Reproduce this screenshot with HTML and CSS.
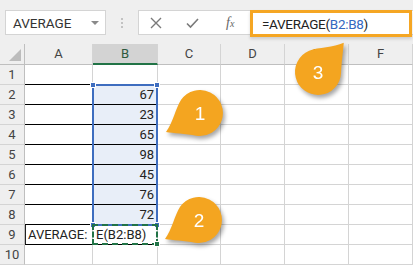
FILE: index.html
```html
<!DOCTYPE html>
<html lang="en">
<head>
  <meta charset="UTF-8">
  <title>AVERAGE</title>
  <link rel="stylesheet" href="styles.css">
</head>
<body>
  <div class="toolbar">
    <div class="namebox"><span>AVERAGE</span><span class="caret"></span></div>
    <div class="grip"></div>
    <div class="fbar">
      <div class="fbtns">
        <svg class="ico" width="12" height="12" viewBox="0 0 12 12"><path d="M1 1L11 11M11 1L1 11" stroke="#7a7a7a" stroke-width="1.4" fill="none"/></svg>
        <svg class="ico" width="13" height="12" viewBox="0 0 13 12"><path d="M1 6.5L4.5 10L12 2" stroke="#7a7a7a" stroke-width="1.6" fill="none"/></svg>
        <span class="fx">f<small>x</small></span>
      </div>
      <div class="finput">=AVERAGE(<span class="ref">B2:B8</span>)</div>
    </div>
  </div>

  <div class="stack">
    <div class="sheet">
      <div class="corner"></div>
      <div class="ch">A</div><div class="ch on">B</div><div class="ch">C</div><div class="ch">D</div><div class="ch">E</div><div class="ch">F</div>

      <div class="rh">1</div><div class="c k"></div><div class="c k"></div><div class="c"></div><div class="c"></div><div class="c"></div><div class="c"></div>
      <div class="rh">2</div><div class="c k"></div><div class="c k n hl">67</div><div class="c"></div><div class="c"></div><div class="c"></div><div class="c"></div>
      <div class="rh">3</div><div class="c k"></div><div class="c k n hl">23</div><div class="c"></div><div class="c"></div><div class="c"></div><div class="c"></div>
      <div class="rh">4</div><div class="c k"></div><div class="c k n hl">65</div><div class="c"></div><div class="c"></div><div class="c"></div><div class="c"></div>
      <div class="rh">5</div><div class="c k"></div><div class="c k n hl">98</div><div class="c"></div><div class="c"></div><div class="c"></div><div class="c"></div>
      <div class="rh">6</div><div class="c k"></div><div class="c k n hl">45</div><div class="c"></div><div class="c"></div><div class="c"></div><div class="c"></div>
      <div class="rh">7</div><div class="c k"></div><div class="c k n hl">76</div><div class="c"></div><div class="c"></div><div class="c"></div><div class="c"></div>
      <div class="rh">8</div><div class="c k"></div><div class="c k n hl">72</div><div class="c"></div><div class="c"></div><div class="c"></div><div class="c"></div>
      <div class="rh">9</div><div class="c k kl">AVERAGE:</div><div class="c k">E(B2:B8)</div><div class="c"></div><div class="c"></div><div class="c"></div><div class="c"></div>
      <div class="rh">10</div><div class="c"></div><div class="c"></div><div class="c"></div><div class="c"></div><div class="c"></div><div class="c"></div>
    </div>

    <div class="sheet marks">
      <div class="sel">
        <span class="h tl"></span><span class="h tr"></span><span class="h bl"></span><span class="h br"></span>
      </div>
      <div class="edit"><span class="h gr"></span></div>
    </div>
  </div>

  <svg class="balloon b1" width="80" height="70" viewBox="-40 -35 80 70">
    <path class="drop" d="M-34 19C-27 10 -24.5 -4.6 -18.9 -13.2A23 23 0 1 1 -4 22.7C-14 21 -27 20 -34 19Z"/>
    <text class="bn" x="0" y="6.5">1</text>
  </svg>
  <svg class="balloon b2" width="80" height="70" viewBox="-40 -35 80 70">
    <path class="drop" d="M-34 19C-27 10 -24.5 -4.6 -18.9 -13.2A23 23 0 1 1 -4 22.7C-14 21 -27 20 -34 19Z"/>
    <text class="bn" x="0" y="6.5">2</text>
  </svg>
  <svg class="balloon b3" width="80" height="70" viewBox="-40 -35 80 70">
    <path class="drop" transform="rotate(-77.8) scale(-1 1)" d="M-34 19C-27 10 -24.5 -4.6 -18.9 -13.2A23 23 0 1 1 -4 22.7C-14 21 -27 20 -34 19Z"/>
    <text class="bn" x="0" y="6.5">3</text>
  </svg>
</body>
</html>
```

FILE: styles.css
```css
body { margin: 0; width: 413px; height: 265px; overflow: hidden; position: relative; background: #fff; font-family: Roboto, "Liberation Sans", sans-serif; color: #222; }

/* formula bar */
.toolbar { height: 44px; box-sizing: border-box; padding-top: 10px; background: #efefef; display: flex; align-items: flex-start; }
.namebox { margin-left: 5px; width: 101px; height: 25px; box-sizing: border-box; background: #fff; border: 1px solid #d4d4d4; display: flex; align-items: center; justify-content: space-between; padding: 0 6px 0 7px; font-size: 13.5px; color: #333; }
.caret { border-left: 4px solid transparent; border-right: 4px solid transparent; border-top: 4px solid #8a8a8a; }
.grip { width: 0; height: 10px; margin: 8px 15px 0 15px; border-left: 2px dotted #c2c2c2; }
.fbar { flex: 1; height: 25px; box-sizing: border-box; display: flex; background: #fff; border: 1px solid #d4d4d4; border-right: none; }
.fbtns { width: 111px; display: flex; align-items: center; padding-left: 11px; box-sizing: border-box; }
.fbtns .ico { margin-right: 24px; }
.fbtns .ico + .ico { margin-right: 27px; }
.fx { font-family: "Liberation Serif", serif; font-style: italic; font-size: 14px; color: #666; }
.fx small { font-size: 10px; }
.finput { flex: 1; margin: -1px 1px -3px 0; border: 3px solid #f5a623; background: #fff; display: flex; align-items: center; padding-left: 9px; font-size: 13.5px; letter-spacing: -0.3px; color: #222; box-shadow: 0 2px 3px rgba(0,0,0,0.15); }
.ref { color: #3468c0; }

/* sheet: cells grid with a second grid of the same tracks stacked on top for the selection marks */
.stack { display: grid; }
.stack > .sheet { grid-area: 1 / 1; }
.sheet { display: grid; grid-template-columns: 25px 68px 65px 63px 64px 64px 64px; grid-template-rows: 21px repeat(10, 20px); }
.corner { background: #efefef; border-right: 1px solid #bfbfbf; border-bottom: 1px solid #bfbfbf; display: flex; justify-content: flex-end; align-items: flex-end; padding: 0 3px 3px 0; }
.corner::after { content: ""; border-left: 12px solid transparent; border-bottom: 12px solid #bcbcbc; }
.ch { background: #efefef; border-right: 1px solid #d4d4d4; border-bottom: 1px solid #bfbfbf; text-align: center; font-size: 13px; line-height: 20px; color: #444; }
.ch.on { background: #d3d3d3; border-bottom: 2px solid #217346; color: #2d5a3d; }
.rh { background: #efefef; border-right: 1px solid #bfbfbf; border-bottom: 1px solid #d4d4d4; text-align: center; font-size: 13px; line-height: 20px; color: #444; }
.c { border-right: 1px solid #d4d4d4; border-bottom: 1px solid #d4d4d4; font-size: 13px; line-height: 19px; padding: 0 3px; white-space: nowrap; }
.k { border-bottom-color: #000; }
.kl { box-shadow: inset 1px 0 0 #222; }
.n { text-align: right; }
.hl { background: #e8eef8; }

.marks { pointer-events: none; }
.sel { grid-column: 3; grid-row: 3 / 10; margin: -1px 0 -1px -1px; border: 2px solid #3e6dbf; position: relative; }
.edit { grid-column: 3; grid-row: 10; margin: -1px 0 0 -1px; border: 2px dashed #217346; position: relative; }
.h { position: absolute; width: 4px; height: 4px; background: #3e6dbf; border: 1px solid #fff; }
.tl { top: -4px; left: -4px; }
.tr { top: -4px; right: -4px; }
.bl { bottom: -4px; left: -4px; }
.br { bottom: -4px; right: -4px; }
.gr { bottom: -4px; right: -4px; background: #217346; }

/* callouts */
.balloon { position: absolute; overflow: visible; filter: drop-shadow(2px 3px 2px rgba(0,0,0,0.35)); }
.b1 { left: 160px; top: 78px; }
.b2 { left: 159px; top: 185px; }
.b3 { left: 278px; top: 37px; }
.drop { fill: #f4a520; }
.bn { fill: #fff; font-family: "Liberation Sans", sans-serif; font-size: 19px; text-anchor: middle; }
```
